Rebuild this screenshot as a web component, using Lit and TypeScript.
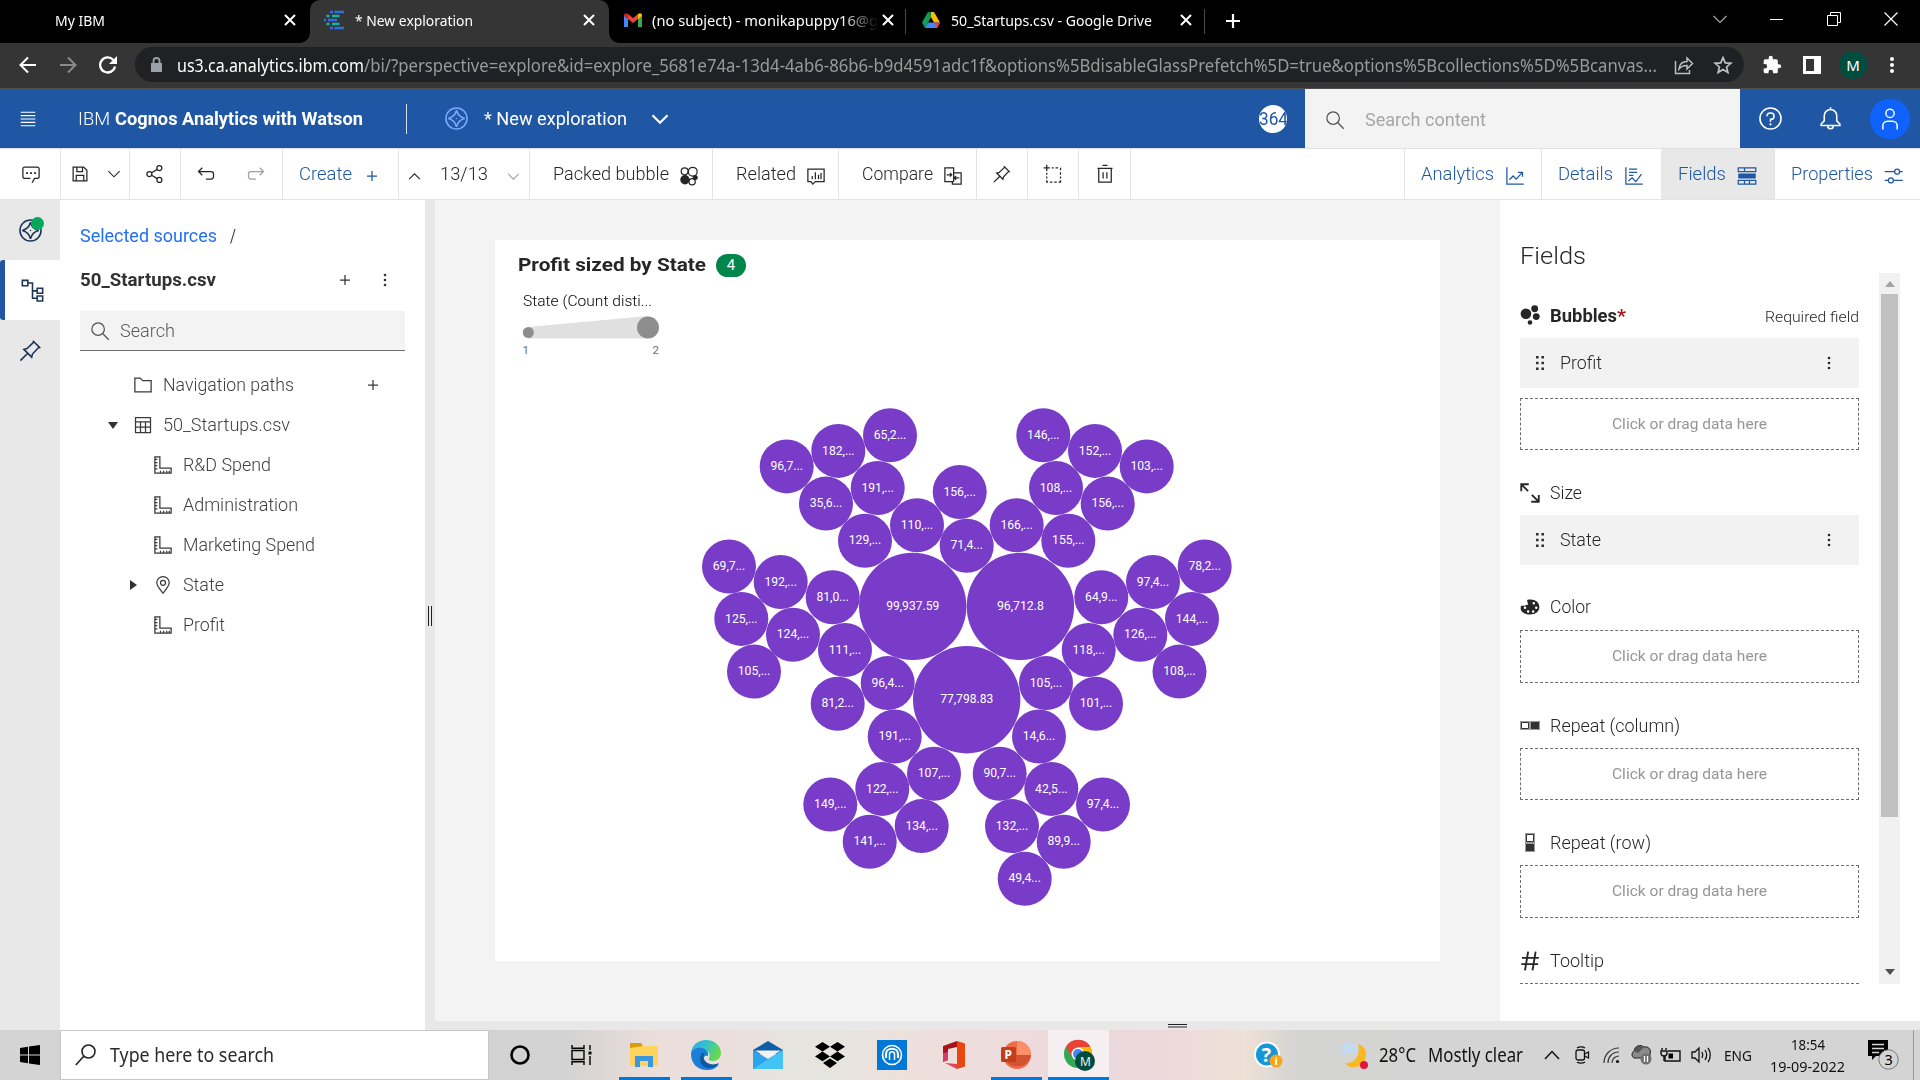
import { LitElement, html, css, svg } from "lit";
import { customElement, property, state } from "lit/decorators.js";
import { styleMap } from "lit/directives/style-map.js";

/** A run of text stretched horizontally to an exact width. */
@customElement("fit-text")
class FitText extends LitElement {
  @property({ type: Number }) w = 0;
  @state() k = 1;
  static styles = css`
    :host { display: block; flex: none; white-space: pre; }
    .box { display: block; }
    .run { display: inline-block; transform-origin: 0 50%; white-space: pre; }
  `;
  firstUpdated() {
    const run = this.renderRoot.querySelector(".run") as HTMLElement;
    const natural = run.getBoundingClientRect().width;
    if (natural > 0 && this.w > 0) this.k = this.w / natural;
  }
  render() {
    return html`<span class="box" style=${styleMap({ width: this.w + "px" })}
      ><span class="run" style=${styleMap({ transform: `scaleX(${this.k})` })}><slot></slot></span></span>`;
  }
}

const t = (s: string, w: number, cls = "") => html`<fit-text class=${cls} w=${w}>${s}</fit-text>`;

const icon = (inner: unknown, size = 20, cls = "") => html`
  <svg class="ic ${cls}" width=${size} height=${size} viewBox="0 0 32 32">${inner}</svg>`;

/* ---- line icons on a 32 unit grid ---- */
const I = {
  comment: svg`<path d="M17.7 30 L21.7 23 H26a3 3 0 0 0 3-3V8a3 3 0 0 0-3-3H6a3 3 0 0 0-3 3v12a3 3 0 0 0 3 3h9"/><path class="f" d="M8 13h3v3H8zM14.500 13h3v3h-3zM21 13h3v3h-3z"/>`,
  save: svg`<path d="M5 5h17l5 5v17H5z M11 5v7h9V5 M10 27v-9h12v9"/>`,
  down: svg`<path d="M6 11l10 10 10-10"/>`,
  up: svg`<path d="M6 21l10-10 10 10"/>`,
  share: svg`<circle cx="23" cy="6.500" r="4"/><circle cx="23" cy="25.500" r="4"/><circle cx="7" cy="16" r="4"/><path d="M10.600 14l9-5.400M10.600 18l9 5.400"/>`,
  undo: svg`<path d="M10 6l-6 6 6 6M4 12h20a4 4 0 0 1 4 4v4a4 4 0 0 1-4 4h-8"/>`,
  redo: svg`<path d="M22 6l6 6-6 6M28 12H8a4 4 0 0 0-4 4v4a4 4 0 0 0 4 4h8"/>`,
  plus: svg`<path d="M16 8v16M8 16h16"/>`,
  bubbles: svg`<circle cx="9" cy="8.500" r="5.500"/><circle cx="22" cy="9" r="7"/><circle class="f" cx="9.500" cy="22" r="7.500"/><circle cx="21" cy="25" r="5"/><circle class="f" cx="26" cy="18.500" r="4"/>`,
  related: svg`<path d="M3 5h26v20H15l-4 4-3-4H3z M10 21v-5M15 21V10M20 21v-7M24 21V11"/>`,
  compare: svg`<path d="M17 25H3V3h14v8M17 11h12v18H15v-4M6 14h8M11 11l3 3-3 3M26 19h-8M21 16l-3 3 3 3M17 11v14"/>`,
  pin: svg`<path d="M19 3.500L28.500 13M20.500 5l-9 8.500-4 1L17.500 24.500l1-4L27 11.500M12.500 19.500L3 29"/>`,
  marquee: svg`<path d="M6 1v10M1 6h10M14 6h3M20 6h4M28 6v4M28 13v4M28 20v3M28 26v3h-3M22 29h-4M15 29h-4M6 26v3h2M6 23v-3M6 17v-3"/>`,
  trash: svg`<path d="M4 7h24M12 2h8M6 7v22h20V7M13 13v10M19 13v10"/>`,
  analytics: svg`<path d="M3 2v27h27M7 22l6-6 5 5 9-10M20.500 10H28v7"/>`,
  details: svg`<path d="M3 2v27h27M8 5h13M8 10h13M8 15h7M7 24l6-5 6 6 9-12"/>`,
  fields: svg`<path d="M2 3h28v6H2zM12 3v6M2 23h28v6H2zM20 23v6M12 23v6"/><path class="f" d="M2 12h28v8H2z"/>`,
  props: svg`<circle cx="21" cy="9" r="4"/><circle cx="11" cy="23" r="4"/><path d="M1 9h16M25 9h5M1 23h6M15 23h15"/>`,
  search: svg`<circle cx="13" cy="13" r="10"/><path d="M20.500 20.500L30 30"/>`,
  explore: svg`<circle cx="16" cy="16" r="13.500"/><path d="M16 5.500c1.500 6 4.500 9 10.500 10.500-6 1.500-9 4.500-10.500 10.500C14.500 20.500 11.500 17.500 5.500 16c6-1.500 9-4.500 10.500-10.500z"/><circle class="f" cx="16" cy="16" r="1"/>`,
  tree: svg`<path d="M3 3h7v7H3zM22 13h7v6.500h-7zM22 23h7v6.500h-7zM10 6.500h6V26h6M16 16.500h6"/>`,
  folder: svg`<path d="M3 5h8.500l4 4H29v18H3z"/>`,
  table: svg`<path d="M4 4h24v24H4zM4 11h24M4 19.500h24M12 11v17M20 11v17"/>`,
  ruler: svg`<path d="M3 3h8v18h18v8H3zM3 7h4M3 12h4M3 17h4M3 22h4M12 29v-4M17 29v-4M22 29v-4M26 29v-4"/>`,
  place: svg`<path d="M16 29C10 21.500 6 17.500 6 12.500a10 10 0 0 1 20 0C26 17.500 22 21.500 16 29z"/><circle cx="16" cy="12.500" r="4"/>`,
  dots: svg`<circle class="f" cx="16" cy="8" r="2.100"/><circle class="f" cx="16" cy="16" r="2.100"/><circle class="f" cx="16" cy="24" r="2.100"/>`,
  menu: svg`<path d="M3 4h26M3 10h26M3 16h26M3 22h26M3 28h26"/>`,
  help: svg`<circle cx="16" cy="16" r="13.500"/><path d="M11.500 13v-.5A4 4 0 0 1 15.500 9h1a4 4 0 0 1 0 8H16v3"/><circle class="f" cx="16" cy="23.500" r="1.400"/>`,
  bell: svg`<path d="M16 1.500v3M16 4.500a8 8 0 0 1 8 8v6.500l4 4v2H4v-2l4-4v-6.500a8 8 0 0 1 8-8zM12.500 25.500a3.500 3.500 0 0 0 7 0"/>`,
  user: svg`<circle cx="16" cy="8.500" r="5.500"/><path d="M6.500 30v-5a6 6 0 0 1 6-6h7a6 6 0 0 1 6 6v5"/>`,
  close: svg`<path d="M8 8l16 16M24 8L8 24"/>`,
  palette: svg`<path class="f" fill-rule="evenodd" d="M1 18C1 9 8 4 17 4c8 0 14 5 14 12s-6 12-15 12C7 28 1 24 1 18zM6 17a2 2 0 1 0 4 0 2 2 0 1 0-4 0M11 23a2 2 0 1 0 4 0 2 2 0 1 0-4 0M19 23a2 2 0 1 0 4 0 2 2 0 1 0-4 0M24 17a2 2 0 1 0 4 0 2 2 0 1 0-4 0M20 10a2 2 0 1 0 4 0 2 2 0 1 0-4 0"/><path class="wf" d="M0 4h11l2 8-6 2-7 0z"/>`,
  bubbleSlot: svg`<circle class="f" cx="9.500" cy="14" r="8.500"/><circle class="f" cx="23.500" cy="6" r="5.500"/><circle class="f" cx="26" cy="18.500" r="5.500"/><circle class="f" cx="16" cy="28" r="3.700"/>`,
  size: svg`<g class="w3"><path d="M2 13V2h12M2.500 2.500L13 13M30 19v11H18M29.500 29.500L19 19"/></g>`,
  hash: svg`<g class="w3"><path d="M13 1L8 31M25 1l-5 30M3 11h27M2 21h27"/></g>`,
};

const BIG: [number, number, string, number][] = [
  [912.7, 606.4, "99,937.59", 53], [1020.4, 606.4, "96,712.8", 47], [966.7, 699.7, "77,798.83", 53],
];
const SMALL: [number, number, string][] = [
  [890, 435.3, "65,2..."], [838.3, 450.9, "182,..."], [786.7, 466.4, "96,7..."], [877.7, 488, "191,..."],
  [826, 503.6, "35,6..."], [865, 540.8, "129,..."], [917, 525.2, "110,..."], [959.7, 492, "156,..."],
  [966.7, 545.8, "71,4..."], [729, 566.5, "69,7..."], [780.7, 582, "192,..."], [832.7, 597.2, "81,0..."],
  [741.3, 618.9, "125,..."], [793, 634.8, "124,..."], [754, 671.6, "105,..."], [845, 650, "111,..."],
  [837.7, 703.7, "81,2..."], [887.7, 683.1, "96,4..."], [894.7, 736.5, "191,..."], [934, 773.7, "107,..."],
  [882.3, 788.9, "122,..."], [830.3, 804.5, "149,..."], [869.7, 841.7, "141,..."], [921.7, 826.1, "134,..."],
  [1043.3, 435.3, "146,..."], [1095, 450.9, "152,..."], [1146.7, 466.4, "103,..."], [1056, 488, "108,..."],
  [1107.7, 503.6, "156,..."], [1016.7, 525.2, "166,..."], [1068.3, 540.8, "155,..."], [1101.3, 597.2, "64,9..."],
  [1153, 582, "97,4..."], [1204.7, 566.5, "78,2..."], [1088.7, 650, "118,..."], [1140.3, 634.8, "126,..."],
  [1192, 618.9, "144,..."], [1179.5, 671.6, "108,..."], [1046, 683.1, "105,..."], [1096, 703.7, "101,..."],
  [1039, 736.5, "14,6..."], [999.7, 773.7, "90,7..."], [1051.3, 788.9, "42,5..."], [1103, 804.5, "97,4..."],
  [1012, 826.1, "132,..."], [1063.7, 841.7, "89,9..."], [1024.7, 878.8, "49,4..."],
];

@customElement("app-root")
class AppRoot extends LitElement {
  static styles = css`
    :host { display: block; width: 1920px; height: 1080px; overflow: hidden; }
    * { box-sizing: border-box; }
    .page { width: 1920px; height: 1080px; display: flex; flex-direction: column; background: #fff;
      font: 300 17.5px/24px "Roboto", "Liberation Sans", sans-serif; color: #262626; }
    svg { display: block; flex: none; overflow: visible; }
    .ic { fill: none; stroke: currentColor; stroke-width: 2; }
    .ic .f { fill: currentColor; stroke: none; }
    .ic .wf { fill: #fff; stroke: none; }
    .ic .w3 { stroke-width: 3; }
    .bold { font-weight: 700; }
    .push { margin-left: auto; }

    .tabs { height: 43px; background: #000; display: flex; color: #fff; flex: none;
      font: 15px/20px "Noto Sans", "Open Sans", sans-serif; }
    .tab { display: flex; align-items: center; height: 43px; padding-bottom: 3px; position: relative; }
    .tab1 { width: 310px; padding-left: 55px; padding-right: 10px; }
    .tab2 { width: 299px; padding-left: 14px; padding-right: 10px; gap: 11px; background: #353535; border-radius: 10px 10px 0 0; }
    .tab2::before, .tab2::after { content: ""; position: absolute; bottom: 0; width: 10px; height: 10px; }
    .tab2::before { left: -10px; background: radial-gradient(circle at 0 0, transparent 9.500px, #353535 10px); }
    .tab2::after { right: -10px; background: radial-gradient(circle at 100% 0, transparent 9.500px, #353535 10px); }
    .tab3 { width: 297px; padding-left: 15px; padding-right: 9px; gap: 10px; }
    .tab4 { width: 299px; padding-left: 16px; padding-right: 9px; gap: 11px; }
    .tab3 .edge, .tab4 .edge { position: absolute; right: 0; top: 9px; width: 1px; height: 25px; background: #4a4a4a; }
    .fade { width: 226px; margin-right: -10px; -webkit-mask-image: linear-gradient(90deg, #000 84%, transparent 100%); }
    .tabs .ic { stroke-width: 3.200; }
    .newtab { margin-left: 18px; display: flex; align-items: center; padding-bottom: 1px; }
    .win { margin-left: auto; display: flex; align-items: center; gap: 43px; padding: 0 22px 5px 0; }

    .bar { height: 46px; background: #353535; border-bottom: 1px solid #4d4d4d; display: flex; align-items: center;
      flex: none; color: #fff; padding: 0 21px 2px 18px; font: 18px/24px "Noto Sans", "Open Sans", sans-serif; }
    .bar .nav { display: flex; gap: 20px; width: 117px; }
    .pill { width: 1609px; height: 35px; border-radius: 18px; background: #202124; display: flex; align-items: center; padding-left: 15px; }
    .pill .url { margin-left: 14px; }
    .pill .rest { color: #9a9a9a; }
    .pill .shr { margin-left: 17px; color: #c0c0c0; }
    .pill .star { margin-left: 20px; color: #c0c0c0; }
    .m18 { margin-left: 18px; }
    .m20 { margin-left: 20px; }
    .avatar { width: 28px; height: 28px; border-radius: 50%; background: #004d40; margin-left: 17px; font: 15px/28px "Noto Sans", sans-serif; text-align: center; }
    .kebab { margin-left: 20px; }

    .head { height: 59px; background: #1f57a4; color: #fff; display: flex; align-items: center; flex: none; font-weight: 400; }
    .head .ham { margin-left: 19px; stroke-width: 1.800; }
    .head .brand { margin-left: 41px; display: flex; gap: 5px; font-size: 17.5px; }
    .light { font-weight: 300; }
    .head .rule { width: 1px; height: 30px; background: #d5dfee; margin-left: 43px; }
    .head .exp { margin-left: 37px; color: #78a9ff; }
    .head .title { margin-left: 15px; }
    .head .chev { margin-left: 21px; stroke-width: 3; }
    .count { margin-left: 587px; width: 28px; height: 28px; border-radius: 50%; background: #fff; color: #1f57a4; overflow: hidden; line-height: 28px; }
    .sbox { width: 435px; height: 59px; margin-left: 18px; background: #f3f3f3; color: #a6a6a6; display: flex; align-items: center; padding-left: 20px; padding-top: 2px; gap: 20px; }
    .sbox svg { color: #525252; }
    .head .help { margin-left: 18px; }
    .head .bell { margin-left: 35px; }
    .user { width: 40px; height: 40px; border-radius: 50%; background: #0f62fe; margin-left: 27px; display: flex; align-items: center; justify-content: center; }

    .tools { height: 52px; flex: none; border-top: 1px solid #e0e0e0; border-bottom: 1px solid #e4e4e4; display: grid;
      grid-template-columns: 60px 69px 51px 102px 116px 131px 183px 126px 138px 51px 51px 52px 274px 137px 120px 113px 146px; }
    .cell { display: flex; align-items: center; box-shadow: 1px 0 0 #e4e4e4; padding-bottom: 1px; }
    .cell.c { justify-content: center; padding-left: 1px; }
    .cell .low { margin-top: 5px; }
    .blue { color: #1f57a4; }
    .cell.on { background: #e8e8e8; }
    .cell.last { box-shadow: none; }
    .grey { color: #a0a0a0; }
    .p10 { padding-left: 10px; gap: 15px; }
    .p14 { padding-left: 16px; gap: 30px; }
    .p16 { padding-left: 17px; gap: 10px; }
    .p8 { padding-left: 8px; gap: 17px; }
    .p24 { padding-left: 24px; gap: 10px; }
    .p17 { padding-left: 17px; gap: 11px; }

    .main { height: 830px; display: grid; grid-template-columns: 60px 365px 1495px; flex: none; }
    .rail { background: #e8e8e8; color: #1c3557; }
    .ritem { height: 60px; display: flex; align-items: center; justify-content: center; position: relative; }
    .ritem.on { background: #fff; border-left: 5px solid #1f57a4; border-radius: 3px 0 0 3px; }
    .ritem .live { position: absolute; left: 31px; top: 17px; width: 13px; height: 13px; border-radius: 50%; background: #05a85b; }

    .src { padding: 24px 20px 0 20px; color: #404040; }
    .crumb { display: flex; gap: 13px; height: 24px; font-weight: 400; }
    .crumb .lnk { color: #2370f4; }
    .shead { display: flex; align-items: center; margin-top: 20px; height: 24px; color: #323232; }
    .shead .more { margin-left: 20px; margin-right: 10px; }
    .find { margin-top: 19px; height: 40px; background: #f3f3f3; border-bottom: 1px solid #6f6f6f; display: flex; align-items: center; padding-left: 10px; gap: 10px; color: #5a5a5a; }
    .find svg { color: #525252; }
    .rows { padding-top: 14px; }
    .row { height: 40px; display: flex; align-items: center; gap: 10px; padding-left: 53px; }
    .row svg { color: #393939; }
    .row.kid { padding-left: 73px; }
    .row.open { padding-left: 28px; gap: 10px; }
    .row.open .tri { margin-right: 5px; }
    .row.shut { padding-left: 50px; }
    .row.shut .tri { margin-right: 6px; }
    .row .add { margin-left: auto; margin-right: 22px; }

    .stage { background: #e8e8e8; padding-left: 10px; display: flex; flex-direction: column; }
    .work { height: 821px; display: grid; grid-template-columns: 1065px 420px; flex: none; }
    .canvas { background: #f3f3f3; padding: 40px 60px; }
    .card { height: 721px; background: #fff; padding: 13px 23px 0; position: relative; }
    .ctitle { display: flex; align-items: center; height: 24px; gap: 10px; font-size: 18.5px; }
    .badge { width: 30px; height: 23px; border-radius: 12px; background: #00854a; color: #fff; font-size: 15px; font-weight: 400; line-height: 22px; text-align: center; }
    .legend { padding: 12px 0 0 5px; font-size: 15px; color: #000; }
    .plot { position: absolute; left: 0; top: 0; pointer-events: none; }
    .plot text { font: 400 12px "Roboto", sans-serif; fill: #fff; }
    .plot .tick { fill: #6f6f6f; font-size: 11.5px; }
    .foot { height: 9px; padding: 3px 0 0 733px; }
    .grip { width: 19px; height: 4px; border-top: 1px solid #222; border-bottom: 2px solid #888; }
    .vgrip { position: absolute; left: 428px; top: 606px; width: 4px; height: 20px; border-left: 1px solid #222; border-right: 1px solid #222; }

    .fields { background: #fff; padding: 0 20px; display: grid; grid-template-columns: 339px 21px; column-gap: 20px; grid-template-rows: 73px 711px; }
    .fields h2 { margin: 0; font-weight: 300; font-size: 24px; line-height: 30px; padding-top: 41px; }
    .slots { overflow: hidden; }
    .slot { display: flex; align-items: center; gap: 10px; height: 30px; }
    .slot.s1 { margin-top: 27px; }
    .slot.s2 { margin-top: 28px; }
    .slot .req { margin-left: auto; font-size: 15px; padding-top: 3px; }
    .star { color: #a2191f; }
    .lab { display: flex; padding-top: 1px; }
    .chip { height: 50px; background: #f2f2f2; display: flex; align-items: center; padding-left: 16px; padding-right: 20px; gap: 16px; }
    .drop { border: 1px dashed #6f6f6f; display: flex; align-items: center; justify-content: center; color: #959595; font-size: 15px; height: 52px; font-weight: 400; }
    .drop.t { height: 53px; padding-bottom: 1px; }
    .rim { border-top: 1px dashed #6f6f6f; }
    .g8 { margin-top: 8px; } .g7 { margin-top: 7px; } .g10 { margin-top: 10px; }
    .scroll { background: #f1f1f1; padding: 8px 2px 0; display: flex; flex-direction: column; align-items: center; height: 711px; }
    .scroll .thumb { width: 17px; height: 523px; background: #c1c1c1; margin: 7px 0 auto; }
    .scroll .dn { margin-bottom: 9px; }

    .task { height: 50px; flex: none; display: flex; color: #111; font: 20px/28px "Noto Sans", "Open Sans", sans-serif;
      background: linear-gradient(90deg, #d4d4d4 0, #d2d2d2 560px, #ecdfdb 660px, #ebdfdb 730px, #e6e4de 790px, #e7e4df 850px, #eee0db 900px, #eddbdd 1020px, #ebd8dc 1130px, #eddcda 1190px, #eee1d6 1245px, #d4d4d3 1295px, #d4d4d4 1400px); }
    .start { width: 60px; display: flex; align-items: center; justify-content: center; }
    .tsearch { width: 429px; background: #fff; border: 1px solid #c6c6c6; display: flex; align-items: center; padding-left: 14px; gap: 14px; color: #2b2b2b; }
    .app { width: 62px; display: flex; align-items: center; justify-content: center; position: relative; }
    .app.run::after { content: ""; position: absolute; left: 6px; right: 5px; bottom: 0; height: 3px; background: #0078d7; }
    .app.hot { background: #f6eff1; width: 61px; margin-left: 1px; }
    .app.hot::after { left: 0; right: 0; }
    .tray { display: flex; align-items: center; padding-left: 145px; }
    .a { margin-left: 56px; } .b { margin-left: 10px; } .c12 { margin-left: 12px; } .d { margin-left: 21px; }
    .b9 { margin-left: 9px; } .e { margin-left: 15px; } .g { margin-left: 13px; } .h { margin-left: 13px; }
    .eng { font-size: 15px; }
    .clock { margin-left: 18px; width: 75px; display: flex; flex-direction: column; align-items: center; font-size: 15px; line-height: 22px; }
    .note { margin-left: 23px; }
    .peek { width: 1px; height: 50px; background: #9a9a9a; margin-left: 13px; }
    .tx { font-family: "Noto Sans", sans-serif; }
  `;

  tabsRow() {
    return html`<div class="tabs">
      <div class="tab tab1">${t("My IBM", 50)}<span class="push">${icon(I.close)}</span></div>
      <div class="tab tab2">
        <svg width="20" height="20" viewBox="0 0 20 20" fill="none" stroke-width="2.400">
          <path stroke="#2f6fe8" d="M6 2h3M10.500 2H20M0 10h2M4 10h9M6 18h3M10.500 18H20"/>
          <path stroke="#12b5a6" d="M2.500 6h3M8 6h7.500M2.500 14h3M8 14h7.500"/></svg>
        ${t("* New exploration", 118)}<span class="push">${icon(I.close)}</span></div>
      <div class="tab tab3">
        <svg width="18" height="14" viewBox="0 0 18 14"><path fill="#4285f4" d="M0 2v12h4V5z"/><path fill="#34a853" d="M18 2v12h-4V5z"/>
          <path fill="#c5221f" d="M0 2.200C0 0 2 -.5 4 1v5L0 3z"/><path fill="#ea4335" d="M4 1l5 4 5-4v5L9 10 4 6z"/><path fill="#fbbc04" d="M18 2.200c0-2.200-2-2.700-4-1.200v5l4-3z"/></svg>
        <div class="fade">${t("(no subject) - monikapuppy16@g", 226)}</div><span class="push">${icon(I.close)}</span><i class="edge"></i></div>
      <div class="tab tab4">
        <svg width="18" height="16" viewBox="0 0 18 16"><path fill="#0f9d58" d="M6 0L0 10.500 3 16 9 5.200z"/><path fill="#fbbc04" d="M6 0h6l6 10.500h-6z"/><path fill="#4285f4" d="M3 16l3-5.500h12L15 16z"/><path fill="#0b8043" d="M6 0h3l0 5.200z"/><path fill="#ea4335" d="M18 10.500L15 16l-3-5.500z"/></svg>
        ${t("50_Startups.csv - Google Drive", 201)}<span class="push">${icon(I.close)}</span><i class="edge"></i></div>
      <div class="newtab"><svg width="20" height="20" viewBox="0 0 20 20" stroke="#fff" stroke-width="2.200"><path d="M10 3v14M3 10h14"/></svg></div>
      <div class="win">
        <svg width="14" height="14" viewBox="0 0 14 14" fill="none" stroke="#aaa" stroke-width="1.200"><path d="M0.500 4l6.500 6.500L13.500 4"/></svg>
        <svg width="14" height="14" viewBox="0 0 14 14" stroke="#fff"><path d="M0 7.500h13"/></svg>
        <svg width="14" height="14" viewBox="0 0 14 14" fill="none" stroke="#fff"><path d="M.5 3.500h10v10H.5zM3.500 3V.5h10v10H11"/></svg>
        <svg width="14" height="14" viewBox="0 0 14 14" stroke="#fff" stroke-width="1.200"><path d="M.5.5l13 13M13.500.5L.5 13.500"/></svg>
      </div></div>`;
  }

  urlRow() {
    return html`<div class="bar">
      <div class="nav">
        <svg width="20" height="20" viewBox="0 0 20 20" fill="none" stroke="#fff" stroke-width="2"><path d="M18 10H3M10 2.500L2.500 10l7.500 7.500"/></svg>
        <svg width="20" height="20" viewBox="0 0 20 20" fill="none" stroke="#8a8a8a" stroke-width="2"><path d="M2 10h15M10 2.500l7.500 7.500-7.500 7.500"/></svg>
        <svg width="20" height="20" viewBox="0 0 20 20" fill="none" stroke="#fff" stroke-width="2.300"><path d="M17 11.500A7.500 7.500 0 1 1 15.300 5"/><path fill="#fff" stroke="none" d="M19 1v8h-8z"/></svg>
      </div>
      <div class="pill">
        <svg width="13" height="16" viewBox="0 0 13 16"><path fill="#9aa0a6" d="M1 6h11v9H1z"/><path fill="none" stroke="#9aa0a6" stroke-width="1.800" d="M3.500 6V4a3 3 0 0 1 6 0v2"/></svg>
        ${t("us3.ca.analytics.ibm.com", 187, "url")}
        ${t("/bi/?perspective=explore&id=explore_5681e74a-13d4-4ab6-86b6-b9d4591adc1f&options%5BdisableGlassPrefetch%5D=true&options%5Bcollections%5D%5Bcanvas...", 1293, "rest")}
        <svg class="shr" width="20" height="20" viewBox="0 0 20 20" fill="none" stroke="currentColor" stroke-width="1.500"><path d="M1.500 6v12.500h14V15M5 14c.5-5 3-7.500 8-7.500V3l5.500 5.500L13 14v-3.500c-4 0-6 1-8 3.500z"/></svg>
        <svg class="star" width="18" height="18" viewBox="0 0 20 20" fill="none" stroke="#c0c0c0" stroke-width="1.900"><path d="M10 1.800l2.500 5.800 6.200.5-4.700 4.100 1.400 6.100-5.400-3.200-5.400 3.200L6 12.200 1.300 8.100l6.200-.5z"/></svg>
      </div>
      <svg class="m18" width="20" height="20" viewBox="0 0 24 24" fill="#fff"><path d="M20.500 11H19V7a2 2 0 0 0-2-2h-4V3.500a2.500 2.500 0 0 0-5 0V5H4a2 2 0 0 0-2 2v3.800h1.500a2.700 2.700 0 0 1 0 5.400H2V20a2 2 0 0 0 2 2h3.800v-1.500a2.700 2.700 0 0 1 5.400 0V22H17a2 2 0 0 0 2-2v-4h1.500a2.500 2.500 0 0 0 0-5z"/></svg>
      <svg class="m20" width="20" height="18" viewBox="0 0 20 18"><path fill="#fff" fill-rule="evenodd" d="M1 0h18v18H1zM4 3v12h8V3z"/></svg>
      <div class="avatar">M</div>
      <svg class="kebab" width="10" height="20" viewBox="0 0 10 20" fill="#fff"><circle cx="5" cy="4" r="2"/><circle cx="5" cy="10" r="2"/><circle cx="5" cy="16" r="2"/></svg>
    </div>`;
  }

  header() {
    return html`<div class="head">
      ${icon(I.menu, 18, "ham")}
      <div class="brand">${t("IBM", 32, "light")}${t("Cognos Analytics with Watson", 248, "bold")}</div>
      <div class="rule"></div>${icon(I.explore, 25, "exp")}${t("* New exploration", 143, "title")}${icon(I.down, 24, "chev")}
      <div class="count">${t("364", 29)}</div>
      <div class="sbox">${icon(I.search, 20)}${t("Search content", 121)}</div>
      ${icon(I.help, 25, "help")}${icon(I.bell, 25, "bell")}
      <div class="user">${icon(I.user, 24)}</div>
    </div>`;
  }

  toolbar() {
    return html`<div class="tools">
      <div class="cell c">${icon(I.comment)}</div>
      <div class="cell p10">${icon(I.save)}${icon(I.down, 18)}</div>
      <div class="cell c">${icon(I.share)}</div>
      <div class="cell p14">${icon(I.undo)}${icon(I.redo, 20, "grey")}</div>
      <div class="cell p16 blue">${t("Create", 53)}${icon(I.plus, 20, "low")}</div>
      <div class="cell p8">${icon(I.up, 17, "low")}${t("13/13", 48)}${icon(I.down, 17, "grey low")}</div>
      <div class="cell p24">${t("Packed bubble", 116)}${icon(I.bubbles, 20, "low")}</div>
      <div class="cell p24">${t("Related", 60)}${icon(I.related, 20, "low")}</div>
      <div class="cell p24">${t("Compare", 71)}${icon(I.compare, 20, "low")}</div>
      <div class="cell c">${icon(I.pin)}</div>
      <div class="cell c">${icon(I.marquee)}</div>
      <div class="cell c">${icon(I.trash)}</div>
      <div class="cell"></div>
      <div class="cell p17 blue">${t("Analytics", 73)}${icon(I.analytics, 20, "low")}</div>
      <div class="cell p17 blue">${t("Details", 55)}${icon(I.details, 20, "low")}</div>
      <div class="cell p17 blue on">${t("Fields", 48)}${icon(I.fields, 20, "low")}</div>
      <div class="cell p17 blue last">${t("Properties", 82)}${icon(I.props, 20, "low")}</div>
    </div>`;
  }

  sources() {
    const kid = (s: string, w: number) => html`<div class="row kid">${icon(I.ruler)}${t(s, w)}</div>`;
    return html`<div class="src">
      <div class="crumb">${t("Selected sources", 137, "lnk")}${t("/", 6)}</div>
      <div class="shead">${t("50_Startups.csv", 136, "bold")}<span class="push">${icon(I.plus)}</span>${icon(I.dots, 20, "more")}</div>
      <div class="find">${icon(I.search)}${t("Search", 55)}</div>
      <div class="rows">
        <div class="row">${icon(I.folder)}${t("Navigation paths", 131)}${icon(I.plus, 20, "add")}</div>
        <div class="row open"><svg class="tri" width="10" height="7" viewBox="0 0 10 7"><path fill="#323232" d="M0 0h10L5 7z"/></svg>${icon(I.table)}${t("50_Startups.csv", 127)}</div>
        ${kid("R&D Spend", 88)}${kid("Administration", 115)}${kid("Marketing Spend", 132)}
        <div class="row shut"><svg class="tri" width="7" height="10" viewBox="0 0 7 10"><path fill="#323232" d="M0 0v10l7-5z"/></svg>${icon(I.place)}${t("State", 41)}</div>
        ${kid("Profit", 42)}
      </div></div>`;
  }

  plot() {
    const bubble = (x: number, y: number, r: number, s: string, w: number) => svg`
      <circle cx=${x} cy=${y} r=${r} fill="#783cc8"/>
      <text x=${x - w / 2} y=${y + 3.6} textLength=${w} lengthAdjust="spacingAndGlyphs">${s}</text>`;
    return html`<svg class="plot" width="945" height="721" viewBox="495 240 945 721">
      <path fill="#e0e0e0" d="M528 327L648 316v22.500H528z"/>
      <circle cx="528.300" cy="332.500" r="5.500" fill="#8d8d8d"/><circle cx="648" cy="327.500" r="11" fill="#8d8d8d"/>
      <text class="tick" x="522.500" y="354">1</text><text class="tick" x="652.500" y="354">2</text>
      ${BIG.map(([x, y, s, w]) => bubble(x, y, 53.7, s, w))}
      ${SMALL.map(([x, y, s]) => bubble(x, y, 27, s, 32.5))}
    </svg>`;
  }

  fieldsPane() {
    const chip = (s: string, w: number) => html`<div class="chip">
      <svg width="8" height="14" viewBox="0 0 8 14" fill="#323232"><path d="M0 0h2.600v2.600H0zM5.400 0H8v2.600H5.400zM0 5.700h2.600v2.600H0zM5.400 5.700H8v2.600H5.400zM0 11.400h2.600V14H0zM5.400 11.400H8V14H5.400z"/></svg>
      ${t(s, w)}<span class="push">${icon(I.dots, 20)}</span></div>`;
    const drop = (cls: string) => html`<div class="drop ${cls}">${t("Click or drag data here", 155)}</div>`;
    return html`<div class="fields">
      <h2>${t("Fields", 66)}</h2><div></div>
      <div class="slots">
        <div class="slot s1">${icon(I.bubbleSlot)}<div class="lab bold">${t("Bubbles", 67)}${t("*", 9, "star")}</div>${t("Required field", 94, "req")}</div>
        <div class="g8">${chip("Profit", 42)}</div>
        ${drop("g10")}
        <div class="slot s2">${icon(I.size)}${t("Size", 32)}</div>
        <div class="g7">${chip("State", 41)}</div>
        <div class="slot s1">${icon(I.palette)}${t("Color", 41)}</div>
        ${drop("t g8")}
        <div class="slot s2"><svg width="20" height="10" viewBox="0 0 20 10"><path fill="#9a9a9a" d="M0 0h20v9H0z"/><path fill="#fff" stroke="#323232" d="M1.500 1.500h7v6h-7z"/><path fill="#323232" d="M11 1h8v7h-8z"/></svg>${t("Repeat (column)", 130)}</div>
        ${drop("g7")}
        <div class="slot s2"><svg width="20" height="20" viewBox="0 0 20 20"><path fill="#9a9a9a" d="M5 0h10v19H5z"/><path fill="#fff" stroke="#323232" d="M6.500 1.500h7v7h-7z"/><path fill="#323232" d="M6 11h8v7H6z"/></svg>${t("Repeat (row)", 101)}</div>
        ${drop("t g7")}
        <div class="slot s2">${icon(I.hash)}${t("Tooltip", 54)}</div>
        <div class="rim g7"></div>
      </div>
      <div class="scroll">
        <svg width="10" height="6" viewBox="0 0 10 6"><path fill="#a3a3a3" d="M0 6h10L5 0z"/></svg>
        <div class="thumb"></div>
        <svg class="dn" width="10" height="6" viewBox="0 0 10 6"><path fill="#505050" d="M0 0h10L5 6z"/></svg>
      </div></div>`;
  }

  taskbar() {
    return html`<div class="task">
      <div class="start"><svg width="20" height="20" viewBox="0 0 20 20"><path d="M0 3l8-1.200v7.700H0zM9 1.600L20 0v9.500H9zM0 10.500h8v7.700L0 17zM9 10.500h11V20L9 18.400z"/></svg></div>
      <div class="tsearch"><svg width="21" height="22" viewBox="0 0 21 22" fill="none" stroke="#222" stroke-width="1.600"><circle cx="13.500" cy="7.500" r="6.500"/><path d="M9 12L.8 21"/></svg>${t("Type here to search", 164)}</div>
      <div class="app"><svg width="20" height="20" viewBox="0 0 20 20"><circle cx="10" cy="10" r="8.500" fill="none" stroke="#000" stroke-width="2.600"/></svg></div>
      <div class="app"><svg width="22" height="20" viewBox="0 0 22 20" fill="none" stroke="#000" stroke-width="1.400"><path d="M1 0v3.300h12V0M1 5.500h12v9H1zM1 20v-3.300h12V20M19 0v5M19 11v9"/><path fill="#000" stroke="none" d="M17.500 6.500h3v3h-3z"/></svg></div>
      <div class="app run"><svg width="28" height="24" viewBox="0 0 28 24"><path fill="#dc9c0a" d="M0 0h11l2 3v2H0z"/><path fill="#ffd45e" d="M0 5l13-2h15v20H0z"/><path fill="#3a96dd" d="M5 13h18v11h-5v-6h-8v6H5z"/></svg></div>
      <div class="app run"><svg width="30" height="30" viewBox="0 0 30 30">
        <defs><linearGradient id="eg" x1="0" y1="0" x2="1" y2=".4"><stop offset="0" stop-color="#2aa9e0"/><stop offset=".5" stop-color="#35c1d1"/><stop offset="1" stop-color="#66d94e"/></linearGradient></defs>
        <path fill="url(#eg)" d="M0 13C1 5 7 0 15 0c9 0 15 6 15 13 0 5-4 8-8 8-3 0-5-1-4-3 2-4-1-8-6-8-4 0-9 1-12 3z"/>
        <path fill="#1b7fd8" d="M0 14c1-5 6-7 11-6 4 1 7 4 6 8-6-2-6 8 2 10 4 1 7-1 9-2-3 5-8 6-12 6C6 30 0 23 0 14z"/>
        <path fill="#0c59a4" d="M11 13c-5 7 0 15 7 15 5 0 8-2 10-5-6 3-13 1-15-4-1-3 0-5 1-6z"/></svg></div>
      <div class="app"><svg width="30" height="28" viewBox="0 0 30 28"><path fill="#0f5fa8" d="M0 9L15 0l15 9v4H0z"/><path fill="#2aa4ea" d="M0 9l15 9 15-9v19H0z"/><path fill="#50d0fa" d="M30 9L0 28h30z" opacity=".7"/><path fill="#f2f2f2" d="M2 9.500h26L15 17.500z"/></svg></div>
      <div class="app"><svg width="30" height="26" viewBox="0 0 30 26"><path d="M7.500 0L15 4.800 7.500 9.600 0 4.800zM22.500 0L30 4.800l-7.500 4.800L15 4.800zM7.500 9.600L15 14.400l-7.500 4.800L0 14.400zM22.500 9.600L30 14.400l-7.500 4.800L15 14.400zM15 16.500l7 4.500-7 5-7-5z"/></svg></div>
      <div class="app"><svg width="30" height="30" viewBox="0 0 30 30"><path fill="#0078d7" d="M0 0h30v30H0z"/><circle cx="15" cy="15" r="9.500" fill="none" stroke="#fff" stroke-width="1.600"/><path fill="none" stroke="#fff" stroke-width="2.200" d="M9 18v-4c0-7 12-7 12 0v4"/><path fill="none" stroke="#fff" stroke-width="1.500" d="M12.500 20v-6c0-3 5-3 5 0v6"/></svg></div>
      <div class="app"><svg width="24" height="28" viewBox="0 0 24 28"><path fill="#e8470f" d="M15 0l8 2.500v23L15 28z"/><path fill="#a8121c" d="M15 0L1 5v16l5-2V8l9-2z"/><path fill="#d63a6a" d="M1 21l5-2v-8L1 12z"/><path fill="#e0435f" d="M3 22l12 6v-5z"/></svg></div>
      <div class="app run"><svg width="30" height="28" viewBox="0 0 30 28"><circle cx="16" cy="14" r="14" fill="#ed6c47"/><path fill="#ff8f6b" d="M16 0a14 14 0 0 1 14 14H16z"/><path fill="#d35230" d="M2.500 14H30a14 14 0 0 1-27.500 0z"/><rect y="6" width="15" height="15" rx="1.500" fill="#c43e1c"/><text class="tx" x="3.500" y="18" font-size="12" font-weight="700" fill="#fff">P</text></svg></div>
      <div class="app run hot"><svg width="30" height="31" viewBox="0 0 30 31"><circle cx="14" cy="14" r="14" fill="#34a853"/><path fill="#ea4335" d="M2 7a14 14 0 0 1 24.500 0H14l-6 10z"/><path fill="#fbbc04" d="M26.300 7A14 14 0 0 1 15 28l5.500-11L14 7z"/><circle cx="14" cy="14" r="6.500" fill="#fff"/><circle cx="14" cy="14" r="5" fill="#4285f4"/><circle cx="21" cy="21" r="10" fill="#004d40"/><text class="tx" x="16" y="25.500" font-size="12" fill="#e8f5f2">M</text></svg></div>
      <div class="tray">
        <svg width="30" height="28" viewBox="0 0 30 28"><circle cx="13" cy="13.500" r="13" fill="#fff"/><circle cx="13" cy="13.500" r="11" fill="#1596d8"/><text class="tx" x="7.500" y="21" font-size="20" font-weight="700" fill="#fff">?</text><circle cx="22" cy="20" r="6.500" fill="#f7a51c"/><text class="tx" x="20.500" y="24" font-size="11" font-weight="700" fill="#fff">i</text></svg>
        <svg class="a" width="30" height="28" viewBox="0 0 30 28"><path fill="#f9b91f" d="M18 3c10 3 10 14 4 20-5 5-14 4-17-1 9 1 16-6 13-19z"/><path fill="#c4d9f2" d="M3 12a4 4 0 0 1 0-7 5 5 0 0 1 9-2 5 5 0 0 1 4 9z"/><circle cx="24" cy="24" r="4" fill="#e3173e"/></svg>
        ${t("28°C", 37, "b9")}${t("Mostly clear", 95, "c12")}
        <svg class="d" width="16" height="10" viewBox="0 0 16 10" fill="none" stroke="#111" stroke-width="1.500"><path d="M1 9l7-7.500L15 9"/></svg>
        <svg class="e" width="15" height="18" viewBox="0 0 15 18" fill="none" stroke="#111" stroke-width="1.300"><rect x="1" y="4" width="8.500" height="10" rx="2"/><path d="M9.500 8l4-2v6l-4-2M2 2c2-1.500 6-1.500 8 0M2 16c2 1.500 6 1.500 8 0"/></svg>
        <svg class="g" width="18" height="17" viewBox="0 0 18 17" fill="none" stroke="#111" stroke-width="1.200"><path d="M1 16C1 8 7 1 16 1M5 16c0-6 4-11 11-11M9 16c0-4 3-7 7-7" opacity=".8"/><circle cx="14.500" cy="14.500" r="1.600" fill="#111" stroke="none"/></svg>
        <svg class="b" width="20" height="20" viewBox="0 0 20 20"><path fill="#8a8a8a" stroke="#222" d="M3 13a4 4 0 0 1 0-7 6 6 0 0 1 10-4 5 5 0 0 1 6 7v4z"/><path fill="#555" d="M3 6a6 6 0 0 1 10-4l-6 6z"/><circle cx="15" cy="14" r="5.500" fill="#707070"/><path stroke="#fff" stroke-width="1.300" d="M13.500 11v6M16.500 11v6"/></svg>
        <svg class="b" width="20" height="15" viewBox="0 0 20 15"><path fill="none" stroke="#111" stroke-width="1.400" d="M7 3h12v10H4V8M1 0v2M5 0v2M0 3h6v2a3 3 0 0 1-6 0zM3 8v5"/><path d="M7.500 5.500H12v5H7.500z"/></svg>
        <svg class="b" width="20" height="18" viewBox="0 0 20 18" fill="none" stroke="#111" stroke-width="1.300"><path d="M1 6h3l4-4v14l-4-4H1zM11 6c1 2 1 4 0 6M14 4c2 3 2 7 0 10M17 2c3 4 3 10 0 14"/></svg>
        ${t("ENG", 28, "h eng")}
        <div class="clock">${t("18:54", 34)}${t("19-09-2022", 75)}</div>
        <svg class="note" width="32" height="30" viewBox="0 0 32 30"><path d="M0 0h20v16H8l-4 4v-4H0z"/><path stroke="#d4d4d4" stroke-width="1.500" d="M4 4.500h12M4 8.500h12M4 12.500h7"/><circle cx="20.500" cy="19.500" r="9.700" fill="#d4d4d4" stroke="#777"/><text class="tx" x="16.500" y="25" font-size="14.500">3</text></svg>
        <div class="peek"></div>
      </div></div>`;
  }

  render() {
    return html`<div class="page">
      ${this.tabsRow()}${this.urlRow()}${this.header()}${this.toolbar()}
      <div class="main">
        <div class="rail">
          <div class="ritem">${icon(I.explore, 25)}<i class="live"></i></div>
          <div class="ritem on">${icon(I.tree, 25)}</div>
          <div class="ritem">${icon(I.pin, 25)}</div>
        </div>
        ${this.sources()}
        <div class="stage">
          <div class="work">
            <div class="canvas"><div class="card">
              <div class="ctitle">${t("Profit sized by State", 188, "bold")}<div class="badge">4</div></div>
              <div class="legend">${t("State (Count disti...", 129)}</div>
              ${this.plot()}
            </div></div>
            ${this.fieldsPane()}
          </div>
          <div class="foot"><div class="grip"></div></div>
        </div>
      </div>
      ${this.taskbar()}
      <div class="vgrip"></div>
    </div>`;
  }
}
